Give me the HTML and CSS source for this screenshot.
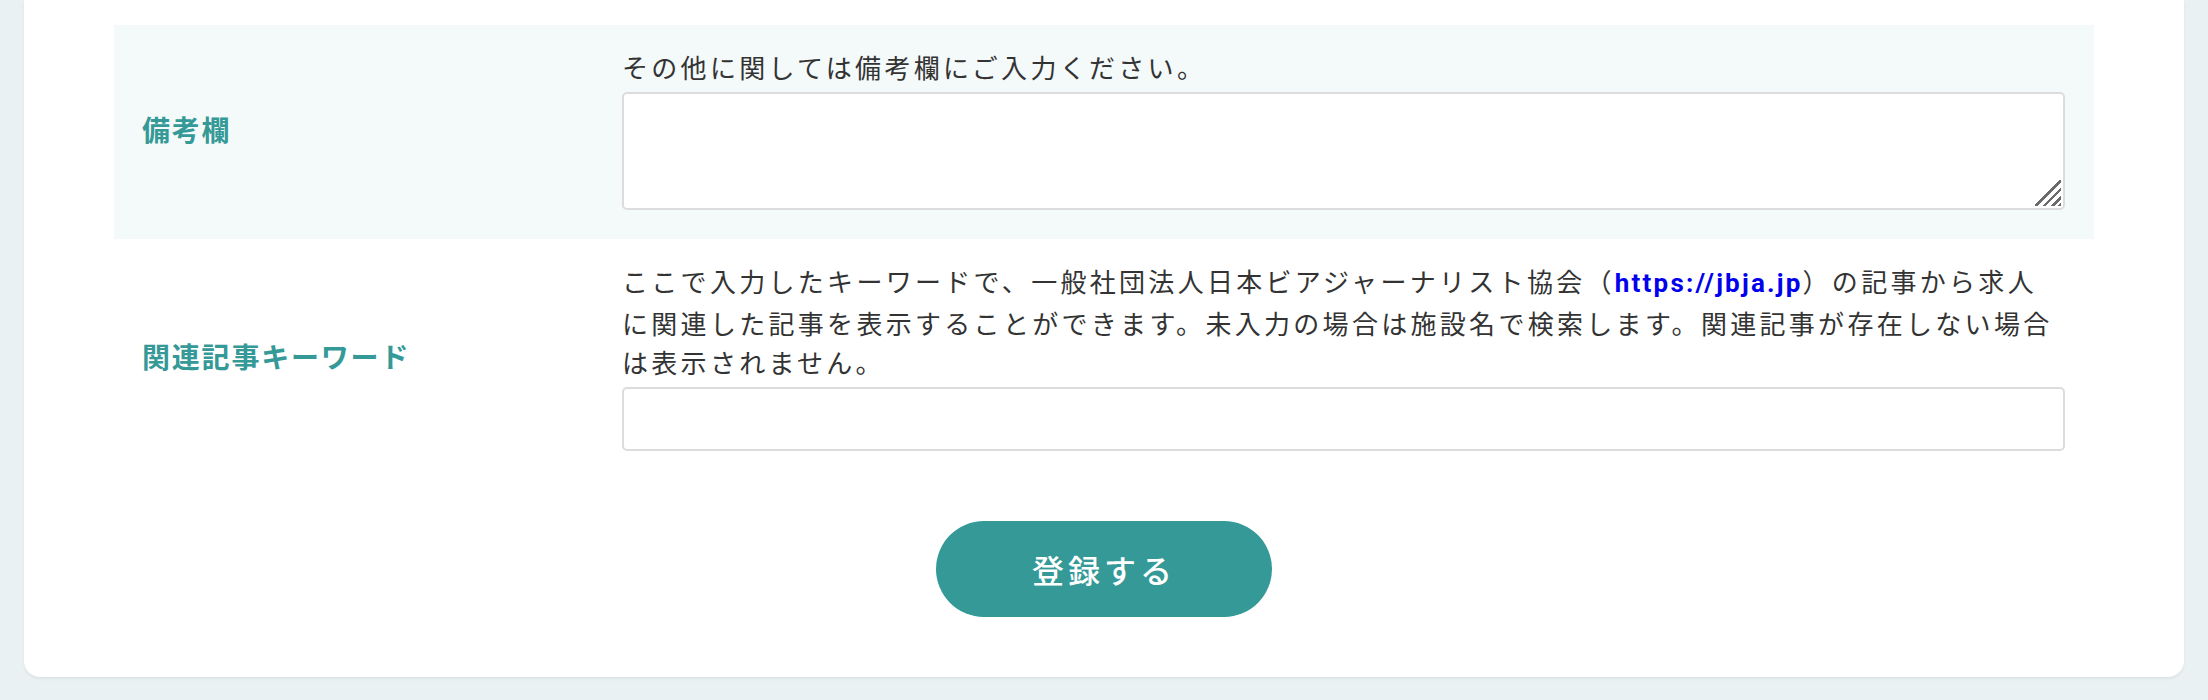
FILE: index.html
```html
<!DOCTYPE html>
<html lang="ja">
<head>
  <meta charset="UTF-8">
  <meta name="viewport" content="width=device-width, initial-scale=1.0">
  <title>求人登録</title>
  <link rel="stylesheet" href="styles.css">
</head>
<body>
  <main class="page">
    <form class="card" onsubmit="return false;">
      <!-- 備考欄 -->
      <div class="form-row form-row--shaded">
        <div class="form-label">備考欄</div>
        <div class="form-field">
          <p class="form-note">その他に関しては備考欄にご入力ください。</p>
          <textarea class="form-textarea" name="note"></textarea>
        </div>
      </div>

      <!-- 関連記事キーワード -->
      <div class="form-row">
        <div class="form-label">関連記事キーワード</div>
        <div class="form-field">
          <p class="form-note">ここで入力したキーワードで、一般社団法人日本ビアジャーナリスト協会（<a href="https://jbja.jp">https://jbja.jp</a>）の記事から求人<br>に関連した記事を表示することができます。未入力の場合は施設名で検索します。関連記事が存在しない場合は表示されません。</p>
          <input class="form-input" type="text" name="keyword">
        </div>
      </div>

      <div class="form-actions">
        <button class="btn-submit" type="submit">登録する</button>
      </div>
    </form>
  </main>
</body>
</html>
```

FILE: styles.css
```css
/* Style global */
body {
  margin: 0;
  background: #e9f1f3;
  color: #333333;
  font-family: "Noto Sans CJK JP", "Noto Sans", sans-serif;
}

.page {
  padding: 0 24px 24px;
}

.card {
  background: #ffffff;
  border-radius: 0 0 16px 16px;
  box-shadow: 0 2px 3px rgba(0, 0, 0, 0.06);
  padding: 25px 90px 60px;
}

/* Lignes du formulaire */
.form-row {
  display: grid;
  grid-template-columns: 480px 1fr;
  align-items: center;
  padding: 22px 29px 29px 28px;
}

.form-row--shaded {
  background: #f4f9f9;
}

.form-label {
  color: #349997;
  font-size: 28px;
  font-weight: 700;
  letter-spacing: 1.8px;
}

.form-note {
  margin: 0;
  font-size: 26px;
  line-height: 39px;
  letter-spacing: 3.3px;
}

.form-note a {
  color: #0000ee;
  font-family: Roboto, "Liberation Sans", sans-serif;
  font-weight: 700;
  letter-spacing: 2.2px;
  text-decoration: none;
}

.form-textarea,
.form-input {
  display: block;
  box-sizing: border-box;
  width: 100%;
  margin-top: 6px;
  border: 2px solid #dcdcdc;
  border-radius: 5px;
  background-color: #ffffff;
  font-family: inherit;
  font-size: 24px;
  padding: 8px 12px;
  outline: none;
}

/* poignée de redimensionnement dessinée en CSS */
.form-textarea {
  height: 118px;
  resize: none;
  background-image: linear-gradient(135deg, transparent 0 48%, #6b6b6b 48% 55%, transparent 55% 64%, #6b6b6b 64% 71%, transparent 71% 80%, #6b6b6b 80% 87%, transparent 87% 93%, #6b6b6b 93%);
  background-repeat: no-repeat;
  background-position: right 2px bottom 2px;
  background-size: 26px 26px;
}

.form-input {
  height: 64px;
}

/* Bouton */
.form-actions {
  display: flex;
  justify-content: center;
  margin-top: 41px;
}

.btn-submit {
  width: 336px;
  height: 96px;
  border: none;
  border-radius: 48px;
  background: #349997;
  color: #ffffff;
  font-family: "Noto Sans CJK JP", sans-serif;
  font-size: 32px;
  font-weight: 500;
  letter-spacing: 4px;
  cursor: pointer;
}

.btn-submit:hover {
  background: #2b8583;
}
```
